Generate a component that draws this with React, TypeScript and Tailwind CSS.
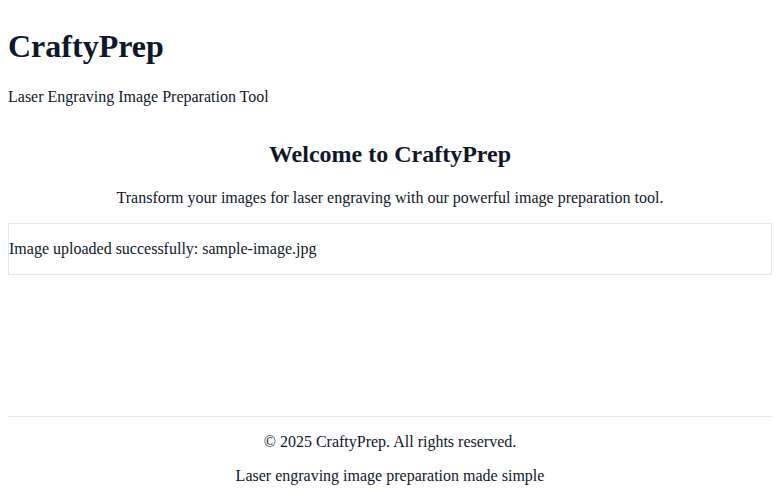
export default function App() {
  return (
    <div className="min-h-screen flex flex-col px-2 text-[#0f172a] font-['Liberation_Serif','Times_New_Roman',serif] bg-white">
      <header>
        <h1 className="mt-[28px] text-[32px] leading-[37px] font-bold">CraftyPrep</h1>
        <p className="mt-[22.5px] text-[16px] leading-[18.4px]">Laser Engraving Image Preparation Tool</p>
      </header>

      <main className="flex-1">
        <h2 className="mt-[35px] text-center text-[24px] leading-[27.6px] font-bold">Welcome to CraftyPrep</h2>
        <p className="mt-[20px] text-center text-[16px] leading-[18.4px]">
          Transform your images for laser engraving with our powerful image preparation tool.
        </p>
        <div className="mt-[16px] border border-[#e2e8f0]">
          <p className="my-[15px] text-[16px] leading-[20px]">Image uploaded successfully: sample-image.jpg</p>
        </div>
      </main>

      <footer className="border-t border-[#e2e8f0] text-center pb-[8px]">
        <p className="mt-[16px] text-[16px] leading-[18.4px]">© 2025 CraftyPrep. All rights reserved.</p>
        <p className="mt-[15px] text-[16px] leading-[18.4px]">Laser engraving image preparation made simple</p>
      </footer>
    </div>
  );
}
